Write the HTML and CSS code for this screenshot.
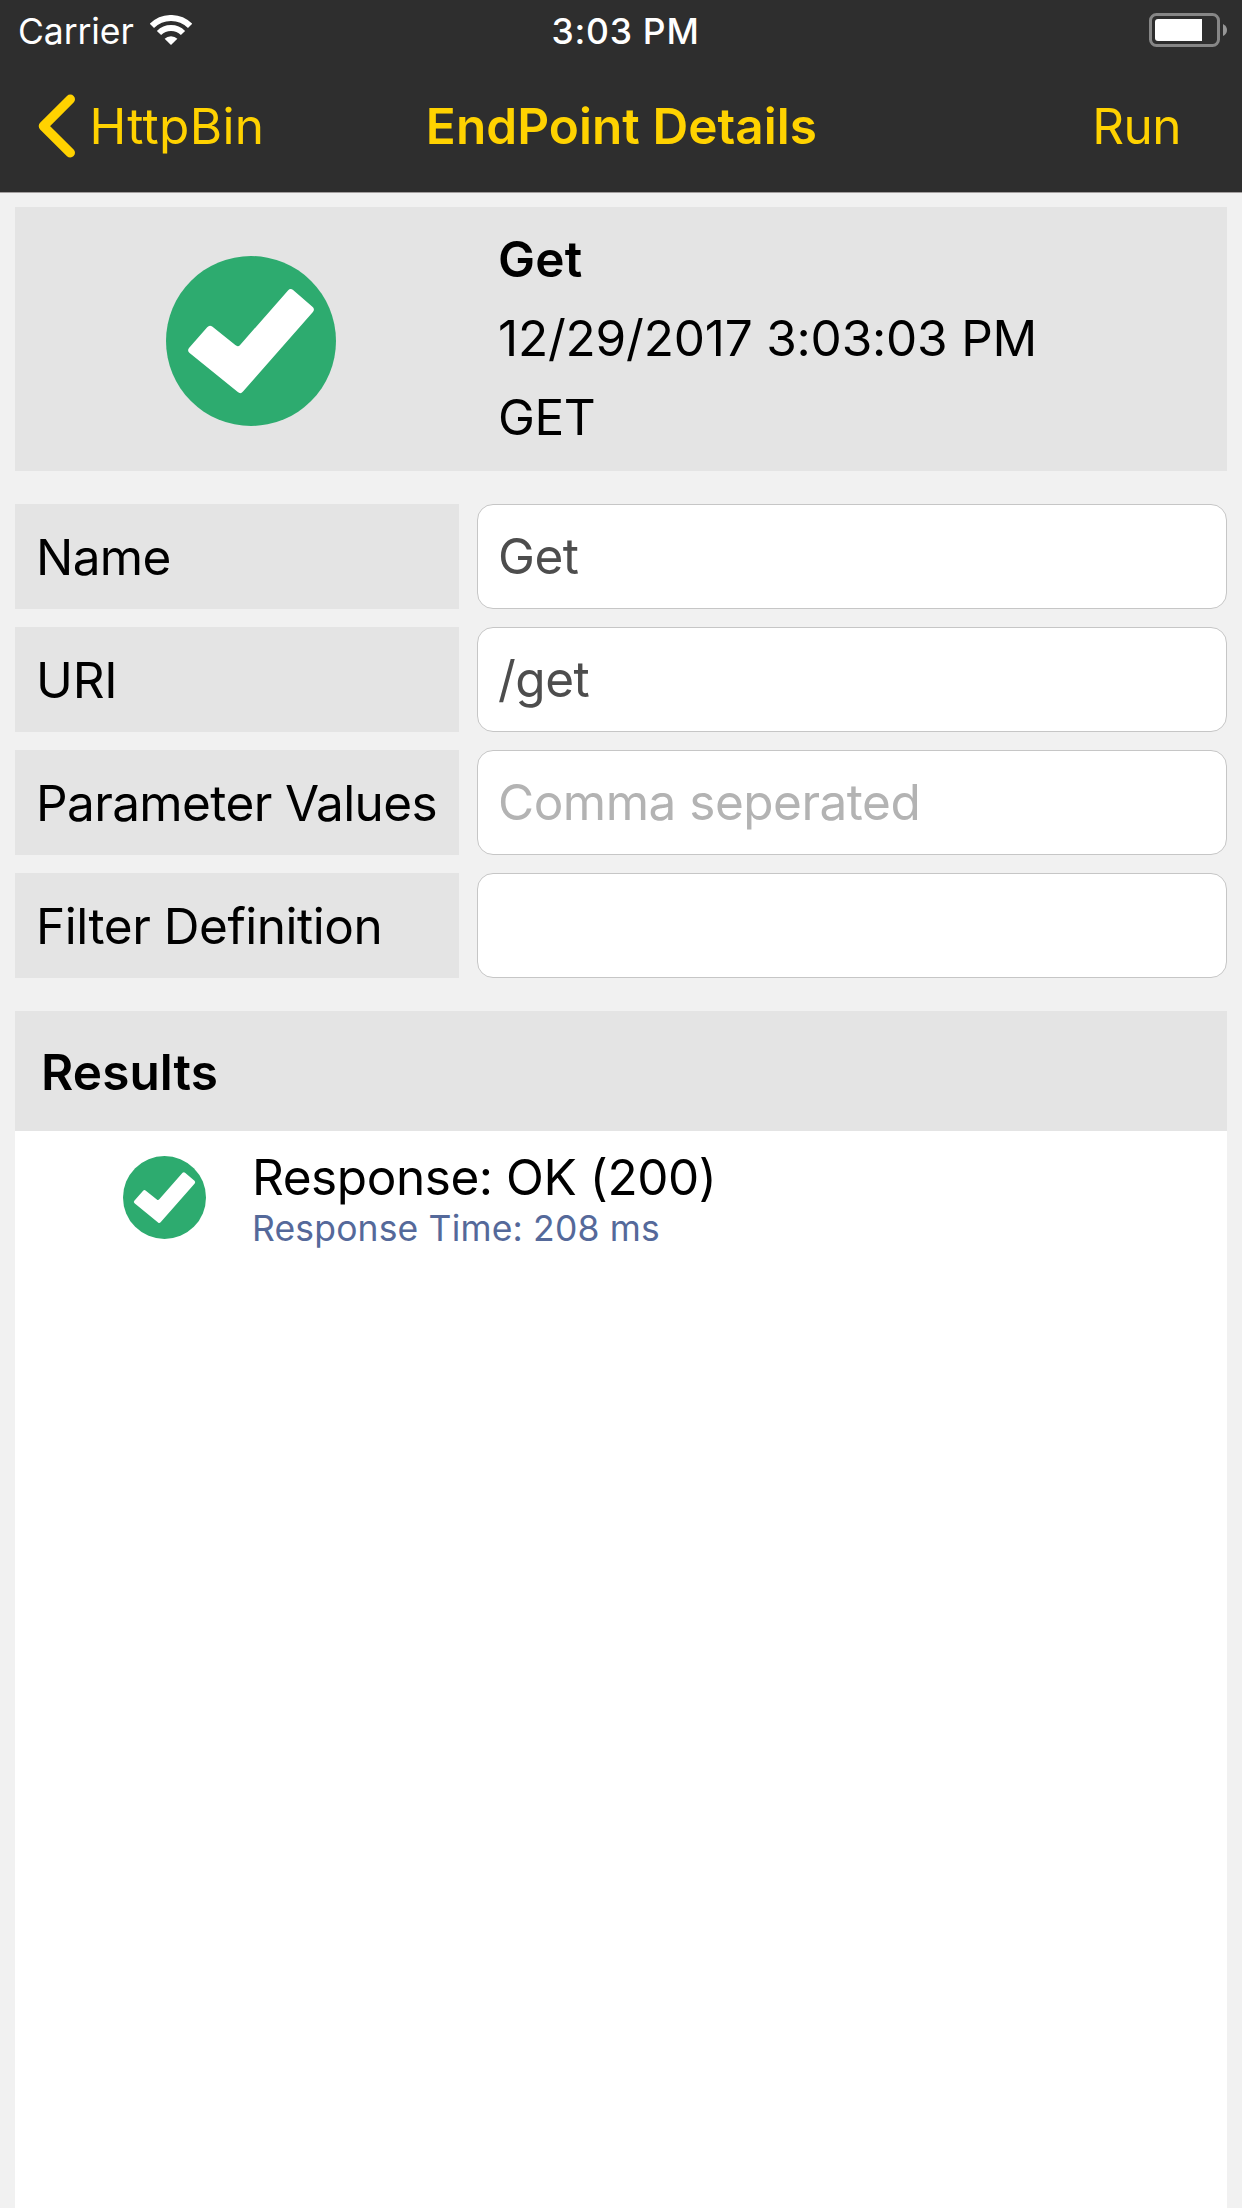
FILE: index.html
```html
<!DOCTYPE html>
<html lang="en">
<head>
  <meta charset="utf-8">
  <title>EndPoint Details</title>
  <link rel="stylesheet" href="styles.css">
</head>
<body>
  <svg class="symbols" aria-hidden="true">
    <symbol id="check-circle" viewBox="0 0 170 170">
      <circle cx="85" cy="85" r="85" fill="#2dab6f"/>
      <path fill="#fff" d="M41.2 71.2Q43.5 68.6 46.2 70.5L69.3 89.1Q72 91.5 74.3 88.7L122 34.5Q124.4 31.8 127.1 34.1L146.4 50.8Q149.2 53.2 146.9 56.1L77 135.6Q74.6 138.4 71.8 136.1L23.6 96.9Q20.8 94.5 23.2 91.7Z"/>
    </symbol>
  </svg>

  <div class="screen">
    <header class="header">
      <div class="status-bar">
        <div class="status-left">
          <span class="carrier">Carrier</span>
          <svg class="wifi" viewBox="0 0 42 30" fill="none" stroke="#fff" stroke-width="6">
            <path d="M1.9 10.9A27 27 0 0 1 40.1 10.9"/>
            <path d="M9 18A17 17 0 0 1 33 18"/>
            <path stroke="none" fill="#fff" d="M14.6 23.8A9 9 0 0 1 27.4 23.8L21 30Z"/>
          </svg>
        </div>
        <span class="clock">3:03 PM</span>
        <svg class="battery" viewBox="0 0 78 34">
          <rect x="1.5" y="1.5" width="68" height="31" rx="6" fill="none" stroke="#868686" stroke-width="3"/>
          <path fill="#fff" d="M9 6H53V28H9Q6 28 6 25V9Q6 6 9 6Z"/>
          <path fill="#969696" d="M74 11Q78 13 78 17T74 23Z"/>
        </svg>
      </div>
      <nav class="nav-bar">
        <a class="back">
          <svg class="chevron" viewBox="0 0 38 64" fill="none" stroke="#ffd200" stroke-width="9.4" stroke-linecap="round" stroke-linejoin="round">
            <path d="M32.3 5.2L5.4 32.1L32.3 58.8"/>
          </svg>
          <span>HttpBin</span>
        </a>
        <h1 class="title">EndPoint Details</h1>
        <a class="run">Run</a>
      </nav>
    </header>

    <main class="content">
      <section class="summary">
        <svg class="summary-icon"><use href="#check-circle"/></svg>
        <div class="summary-text">
          <strong class="summary-name">Get</strong>
          <span>12/29/2017 3:03:03 PM</span>
          <span class="method">GET</span>
        </div>
      </section>

      <form class="fields">
        <label class="label" for="name">Name</label>
        <input class="input" id="name" type="text" value="Get">
        <label class="label label-uri" for="uri">URI</label>
        <input class="input" id="uri" type="text" value="/get">
        <label class="label" for="params">Parameter Values</label>
        <input class="input" id="params" type="text" placeholder="Comma seperated">
        <label class="label label-filter" for="filter">Filter Definition</label>
        <input class="input" id="filter" type="text">
      </form>

      <section class="results">
        <h2 class="results-title">Results</h2>
        <div class="result">
          <svg class="result-icon"><use href="#check-circle"/></svg>
          <div class="result-text">
            <span class="result-main">Response: OK (200)</span>
            <span class="result-detail">Response Time: 208 ms</span>
          </div>
        </div>
      </section>
    </main>
  </div>
</body>
</html>
```
FILE: styles.css
```css
* {
  box-sizing: border-box;
}

body {
  margin: 0;
  font-family: Inter, "Liberation Sans", sans-serif;
  font-size: 49.5px;
  color: #000;
  background: #f1f1f1;
}

.symbols {
  display: none;
}

.screen {
  display: flex;
  flex-direction: column;
  height: 2208px;
}

.header {
  height: 193px;
  background: #2e2e2e;
  border-bottom: 1px solid #a39f9f;
}

.status-bar {
  display: grid;
  grid-template-columns: 1fr auto 1fr;
  align-items: center;
  height: 60px;
  padding: 0 15px 0 18px;
  font-size: 35.5px;
  line-height: 40px;
  color: #fff;
}

.status-left {
  display: flex;
  align-items: center;
}

.carrier {
  width: 132px;
  padding-top: 4px;
  letter-spacing: -0.1px;
}

.wifi {
  width: 42px;
  height: 30px;
}

.clock {
  padding: 4px 0 0 6px;
  font-weight: 500;
  letter-spacing: 0.75px;
}

.battery {
  justify-self: end;
  width: 78px;
  height: 34px;
}

.nav-bar {
  display: grid;
  grid-template-columns: 1fr auto 1fr;
  align-items: center;
  height: 132px;
  padding: 0 61px 0 38px;
  line-height: 60px;
  color: #ffd200;
}

.back {
  display: flex;
  align-items: center;
  gap: 13.5px;
  letter-spacing: 0.3px;
}

.chevron {
  width: 38px;
  height: 64px;
}

.title {
  margin: 0 0 0 24px;
  font-size: inherit;
  font-weight: 600;
  letter-spacing: 0.06px;
}

.run {
  justify-self: end;
  letter-spacing: -0.5px;
}

.content {
  display: flex;
  flex: 1;
  flex-direction: column;
  padding: 14px 15px 0;
}

.summary {
  display: grid;
  grid-template-columns: 483px 1fr;
  height: 264px;
  background: #e4e4e4;
}

.summary-icon {
  width: 170px;
  height: 170px;
  margin: 49px 0 0 151px;
}

.summary-text {
  display: flex;
  flex-direction: column;
  padding-top: 13px;
  line-height: 79px;
  letter-spacing: -0.2px;
}

.summary-name {
  font-weight: 600;
  letter-spacing: 0.2px;
}

.method {
  letter-spacing: -0.5px;
}

.fields {
  display: grid;
  grid-template-columns: 444px 1fr;
  grid-auto-rows: 105px;
  gap: 18px;
  margin: 33px 0;
}

.label {
  padding-left: 21px;
  line-height: 106px;
  letter-spacing: -0.62px;
  white-space: nowrap;
  background: #e4e4e4;
}

.label-uri {
  letter-spacing: -0.2px;
}

.label-filter {
  letter-spacing: -0.47px;
}

.input {
  width: 100%;
  height: 105px;
  padding: 0 20px 1px;
  font: inherit;
  letter-spacing: -0.5px;
  color: #4d4d4d;
  background: #fff;
  border: 1px solid #c6c6c6;
  border-radius: 16px;
}

.input::placeholder {
  color: #b3b3b3;
  opacity: 1;
}

.results {
  flex: 1;
  background: #fff;
}

.results-title {
  height: 120px;
  margin: 0;
  padding-left: 26px;
  font-size: inherit;
  font-weight: 600;
  line-height: 122px;
  letter-spacing: 0.1px;
  background: #e4e4e4;
}

.result {
  display: flex;
  padding: 16px 0 0 107.5px;
}

.result-icon {
  width: 83px;
  height: 83px;
  margin-top: 9px;
}

.result-text {
  display: flex;
  flex-direction: column;
  margin-left: 46.5px;
}

.result-main {
  line-height: 60px;
  letter-spacing: -0.44px;
}

.result-detail {
  font-size: 35.5px;
  line-height: 44px;
  letter-spacing: 0.16px;
  color: #55699a;
}
```
